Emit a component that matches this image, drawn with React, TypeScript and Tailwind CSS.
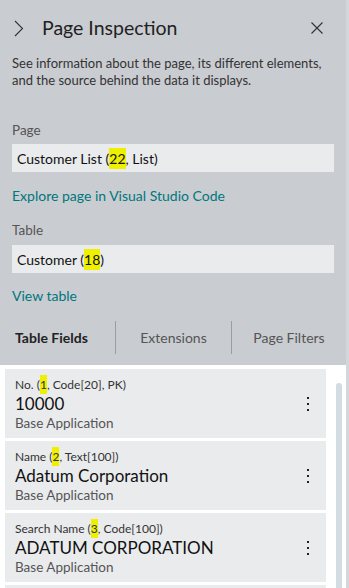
import React from "react";

const fields = [
  { name: "No.", id: "1", rest: ", Code[20], PK)", value: "10000" },
  { name: "Name", id: "2", rest: ", Text[100])", value: "Adatum Corporation" },
  { name: "Search Name", id: "3", rest: ", Code[100])", value: "ADATUM CORPORATION" },
];

function Mark({ children }: { children: React.ReactNode }) {
  return <span className="bg-[#eef000] py-[2px]">{children}</span>;
}

function FieldCard({ f }: { f: (typeof fields)[number] }) {
  return (
    <div className="h-[69px] shrink-0 bg-[#eaebed] flex items-center pl-[10px] pr-[17px]">
      <div className="flex-1 min-w-0 flex flex-col pt-[1px]">
        <div className="text-[12px] leading-[16px] text-[#333]">
          {f.name} (<Mark>{f.id}</Mark>
          {f.rest}
        </div>
        <div className="text-[17px] leading-[21px] text-[#111]">{f.value}</div>
        <div className="text-[13.5px] leading-[18px] text-[#555]">Base Application</div>
      </div>
      <div className="flex flex-col gap-[4px]">
        <span className="w-[2px] h-[2px] bg-[#222]" />
        <span className="w-[2px] h-[2px] bg-[#222]" />
        <span className="w-[2px] h-[2px] bg-[#222]" />
      </div>
    </div>
  );
}

export default function App() {
  return (
    <div
      className="w-[349px] h-[588px] overflow-hidden bg-[#c9ccd1] flex"
      style={{ fontFamily: "Lato, 'Open Sans', sans-serif" }}
    >
      <div className="w-[346px] flex flex-col">
        <div className="h-[55px] flex items-center pl-[14px] pr-[23px] pt-[1px]">
          <svg width="10" height="17" viewBox="0 0 10 17" className="shrink-0">
            <path d="M1 1 L8.5 8.5 L1 16" fill="none" stroke="#333" strokeWidth="1.1" />
          </svg>
          <h1 className="ml-[18px] flex-1 text-[19.5px] leading-[26px] text-[#222]">Page Inspection</h1>
          <svg width="12" height="12" viewBox="0 0 12 12" className="shrink-0">
            <path d="M0.5 0.5 L11.5 11.5 M11.5 0.5 L0.5 11.5" fill="none" stroke="#333" strokeWidth="1.1" />
          </svg>
        </div>

        <div className="px-[12px] flex flex-col">
          <p className="text-[13px] leading-[17px] text-[#333]">
            See information about the page, its different elements, and the source behind the data it
            displays.
          </p>

          <div className="mt-[32px] text-[13.5px] leading-[18px] text-[#555]">Page</div>
          <div className="mt-[5px] h-[28px] bg-[#eaebed] flex items-center px-[5px] text-[14px] text-[#111]">
            <span>
              Customer List (<Mark>22</Mark>, List)
            </span>
          </div>
          <a className="mt-[14px] text-[14px] leading-[19px] text-[#00777d]">
            Explore page in Visual Studio Code
          </a>

          <div className="mt-[16px] text-[13.5px] leading-[18px] text-[#555]">Table</div>
          <div className="mt-[6px] h-[28px] bg-[#eaebed] flex items-center px-[5px] text-[14px] text-[#111]">
            <span>
              Customer (<Mark>18</Mark>)
            </span>
          </div>
          <a className="mt-[13px] text-[14px] leading-[19px] text-[#00777d]">View table</a>
        </div>

        <div className="mt-[16px] h-[33px] flex items-center text-[14px]">
          <div className="w-[115px] pl-[15px] font-bold text-[#222]">Table Fields</div>
          <div className="w-[1px] h-[33px] bg-[#9a9da2]" />
          <div className="w-[115px] text-center text-[#555]">Extensions</div>
          <div className="w-[1px] h-[33px] bg-[#9a9da2]" />
          <div className="flex-1 text-center text-[#555]">Page Filters</div>
        </div>

        <div className="mt-[11px] flex-1 bg-white flex pl-[5px] pt-[4px] min-h-0">
          <div className="w-[321px] flex flex-col gap-[3px] overflow-hidden">
            {fields.map((f) => (
              <FieldCard key={f.id} f={f} />
            ))}
            <div className="h-[69px] shrink-0 bg-[#eaebed]" />
          </div>
          <div className="ml-[10px] mt-[14px] w-[6px] rounded-t-[3px] bg-[#d3dbe3]" />
        </div>
      </div>
      <div className="w-[3px] bg-[#d3d7dc]" />
    </div>
  );
}
